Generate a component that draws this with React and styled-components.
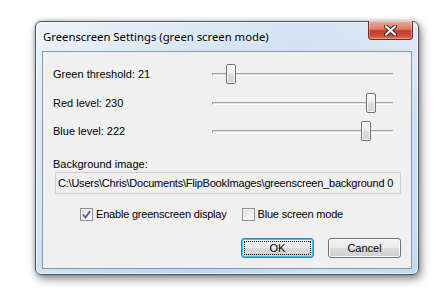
import React from "react";
import styled, { createGlobalStyle } from "styled-components";

const Global = createGlobalStyle`
  html, body { margin: 0; padding: 0; background: #ffffff; }
  body { font-family: "Liberation Sans", Arial, sans-serif; }
`;

const Page = styled.div`
  padding: 21px 0 0 35px;
  width: 444px;
  height: 300px;
  box-sizing: border-box;
`;

const Window = styled.div`
  width: 384px;
  height: 254px;
  box-sizing: border-box;
  border: 1px solid #4a5868;
  border-radius: 6px;
  background:
    linear-gradient(115deg, rgba(255,255,255,0.55) 0%, rgba(255,255,255,0.15) 35%, rgba(255,255,255,0) 55%, rgba(255,255,255,0.25) 80%, rgba(255,255,255,0.1) 100%),
    linear-gradient(180deg, #d6e4f3 0%, #c4d8ef 40%, #bfd6f0 100%);
  box-shadow: 2px 4px 10px rgba(0,0,0,0.45), 0 0 4px rgba(0,0,0,0.25),
    inset 0 0 0 1px rgba(255,255,255,0.6);
  display: flex;
  flex-direction: column;
  padding: 0 6px 5px 6px;
`;

const TitleBar = styled.div`
  height: 29px;
  display: flex;
  align-items: flex-start;
  justify-content: space-between;
  flex-shrink: 0;
`;

const Title = styled.div`
  align-self: center;
  padding-left: 1px;
  font-family: "Noto Sans", "Open Sans", sans-serif;
  font-size: 11.3px;
  color: #000;
  text-shadow: 0 0 6px rgba(255,255,255,0.9);
  white-space: nowrap;
`;

const CloseButton = styled.div`
  width: 45px;
  height: 19px;
  margin-top: -1px;
  margin-right: -1px;
  box-sizing: border-box;
  border: 1px solid #6b2a22;
  border-top: none;
  border-radius: 0 0 4px 4px;
  background: linear-gradient(180deg, #e9a99b 0%, #dc7b68 45%, #c33a29 55%, #cf5038 85%, #de7350 100%);
  box-shadow: inset 0 0 0 1px rgba(255,255,255,0.35);
  display: flex;
  align-items: center;
  justify-content: center;
`;

const Client = styled.div`
  flex: 1;
  border: 1px solid #8399b2;
  background: #f0f0f0;
  padding: 8px 10px 0 10px;
  display: flex;
  flex-direction: column;
  font-size: 11px;
  color: #000;
`;

const SliderRow = styled.div`
  height: 28.5px;
  display: grid;
  grid-template-columns: 159px 181px;
  align-items: center;
`;

const Label = styled.div`
  font-size: 11px;
  line-height: 14px;
  white-space: nowrap;
`;

const SliderBox = styled.div`
  position: relative;
  height: 20px;
`;

const Track = styled.div`
  position: absolute;
  left: 0;
  right: 0;
  top: 9px;
  height: 3px;
  box-sizing: border-box;
  border-top: 1px solid #a3a3a3;
  border-bottom: 1px solid #ffffff;
  border-left: 1px solid #a3a3a3;
  background: #e3e3e3;
`;

const Thumb = styled.div`
  position: absolute;
  top: 0;
  width: 10px;
  height: 20px;
  box-sizing: border-box;
  border: 1px solid #707070;
  border-radius: 2px;
  background: linear-gradient(180deg, #fbfbfb 0%, #ececec 45%, #dcdcdc 55%, #d4d4d4 100%);
  box-shadow: inset 0 0 0 1px rgba(255,255,255,0.8);
`;

const BgLabel = styled(Label)`
  margin-top: 11px;
`;

const PathField = styled.div`
  margin: 1px 0 0 2px;
  height: 22px;
  box-sizing: border-box;
  border: 1px solid #cdcdcd;
  border-radius: 1px;
  background: #f0f0f0;
  padding: 0 0 0 2px;
  display: flex;
  align-items: center;
  overflow: hidden;
  white-space: nowrap;
  font-size: 11px;
  letter-spacing: -0.22px;
`;

const CheckRow = styled.div`
  margin-top: 13px;
  height: 15px;
  padding-left: 27px;
  display: flex;
  align-items: center;
  gap: 15px;
`;

const CheckItem = styled.label`
  display: flex;
  align-items: center;
  gap: 3px;
  font-size: 11px;
  letter-spacing: -0.2px;
  white-space: nowrap;
`;

const Box = styled.span`
  width: 13px;
  height: 13px;
  box-sizing: border-box;
  border: 1px solid #8f8f8f;
  background: linear-gradient(135deg, #d8d8d8 0%, #f0f0f0 55%, #ffffff 100%);
  box-shadow: inset 0 0 0 1px #f4f4f4;
  display: flex;
  align-items: center;
  justify-content: center;
`;

const ButtonRow = styled.div`
  margin-top: 16px;
  display: flex;
  justify-content: flex-end;
  gap: 14px;
`;

const Button = styled.div`
  position: relative;
  width: 73px;
  height: 20px;
  box-sizing: border-box;
  border: 1px solid ${(p) => (p.$default ? "#3c7fb1" : "#707070")};
  border-radius: 3px;
  background: linear-gradient(180deg, #f2f2f2 0%, #ebebeb 50%, #dddddd 50%, #cfcfcf 100%);
  box-shadow: inset 0 0 0 1px ${(p) => (p.$default ? "#48c3f5" : "#fcfcfc")};
  display: flex;
  align-items: center;
  justify-content: center;
  font-size: 11px;
  color: #000;
`;

const FocusRing = styled.span`
  position: absolute;
  inset: 2px;
  border: 1px dotted #000;
  pointer-events: none;
`;

function Slider({ value }) {
  const left = (value / 255) * 171;
  return (
    <SliderBox>
      <Track />
      <Thumb style={{ left: `${left}px` }} />
    </SliderBox>
  );
}

function Check({ checked, children }) {
  return (
    <CheckItem>
      <Box>
        {checked && (
          <svg width="9" height="9" viewBox="0 0 9 9">
            <path d="M1 4.5 L3.5 7.5 L8 1" fill="none" stroke="#4a5f99" strokeWidth="1.8" />
          </svg>
        )}
      </Box>
      {children}
    </CheckItem>
  );
}

export default function App() {
  return (
    <>
      <Global />
      <Page>
        <Window>
          <TitleBar>
            <Title>Greenscreen Settings (green screen mode)</Title>
            <CloseButton>
              <svg width="13" height="11" viewBox="0 0 13 11">
                <path d="M2 1.5 L11 9.5 M11 1.5 L2 9.5" stroke="#3b1d18" strokeWidth="4" strokeLinecap="round" />
                <path d="M2 1.5 L11 9.5 M11 1.5 L2 9.5" stroke="#ffffff" strokeWidth="2.2" strokeLinecap="round" />
              </svg>
            </CloseButton>
          </TitleBar>
          <Client>
            <SliderRow>
              <Label>Green threshold: 21</Label>
              <Slider value={21} />
            </SliderRow>
            <SliderRow>
              <Label>Red level: 230</Label>
              <Slider value={230} />
            </SliderRow>
            <SliderRow>
              <Label>Blue level: 222</Label>
              <Slider value={222} />
            </SliderRow>
            <BgLabel>Background image:</BgLabel>
            <PathField>C:\Users\Chris\Documents\FlipBookImages\greenscreen_background 0</PathField>
            <CheckRow>
              <Check checked>Enable greenscreen display</Check>
              <Check>Blue screen mode</Check>
            </CheckRow>
            <ButtonRow>
              <Button $default>
                OK
                <FocusRing />
              </Button>
              <Button>Cancel</Button>
            </ButtonRow>
          </Client>
        </Window>
      </Page>
    </>
  );
}
